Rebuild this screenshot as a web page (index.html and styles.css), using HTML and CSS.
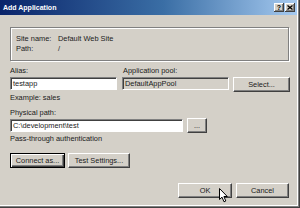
FILE: index.html
```html
<!DOCTYPE html>
<html>
<head>
<meta charset="utf-8">
<link rel="stylesheet" href="styles.css">
</head>
<body>
<div class="dialog">
  <div class="titlebar">
    <span class="title">Add Application</span>
    <div class="tbtns">
      <span class="tbtn help">?</span>
      <span class="tbtn close"><svg width="6" height="5" viewBox="0 0 6 5"><path d="M0.5 0.5 L5.5 4.5 M5.5 0.5 L0.5 4.5" stroke="#000" stroke-width="1.3"/></svg></span>
    </div>
  </div>
  <div class="content">
    <div class="group">
      <div class="info">
        <span>Site name:</span><span>Default Web Site</span>
        <span>Path:</span><span>/</span>
      </div>
    </div>
    <div class="fields">
      <span class="lbl">Alias:</span>
      <span class="lbl pool">Application pool:</span>
      <span></span>
      <div class="textbox">testapp</div>
      <div class="textbox readonly">DefaultAppPool</div>
      <div class="btn select">Select...</div>
    </div>
    <div class="line example">Example: sales</div>
    <div class="line phys">Physical path:</div>
    <div class="pathrow">
      <div class="textbox path">C:\development\test</div>
      <div class="btn dots">...</div>
    </div>
    <div class="line pass">Pass-through authentication</div>
    <div class="btnrow">
      <div class="btn focused connect">Connect as...</div>
      <div class="btn test">Test Settings...</div>
    </div>
    <div class="okrow">
      <div class="btn ok">OK</div>
      <div class="btn cancel">Cancel</div>
    </div>
  </div>
  <svg class="cursor" width="10" height="15" viewBox="0 0 10 15"><path d="M0.5 0.5 L0.5 11.5 L3 9.2 L5 13.8 L6.8 13 L4.9 8.5 L8.3 8.5 Z" fill="#fff" stroke="#000" stroke-width="1"/></svg>
</div>
</body>
</html>
```
FILE: styles.css
```css
body {
  margin: 0;
  background: #d4d0c8;
}
.dialog {
  position: relative;
  width: 300px;
  height: 208px;
  box-sizing: border-box;
  background: #d4d0c8;
  padding: 0 3px 3px 0;
  box-shadow: inset -1px -1px 0 #404040, inset -2px -2px 0 #808080, inset -3px -3px 0 #ffffff;
  font-family: "Liberation Sans", Arial, sans-serif;
  font-size: 7.4px;
  color: #1a1a1a;
  overflow: hidden;
}
.titlebar {
  height: 15px;
  background: linear-gradient(to right, #0a246a, #3a6ea5 55%, #a6caf0);
  display: flex;
  align-items: center;
  justify-content: space-between;
  padding: 0 2px 0 3px;
}
.title {
  color: #fff;
  font-weight: bold;
  font-size: 7px;
}
.tbtns {
  display: flex;
}
.tbtn {
  width: 10px;
  height: 9px;
  box-sizing: border-box;
  background: #d4d0c8;
  box-shadow: inset -1px -1px 0 #404040, inset 1px 1px 0 #fff, inset -2px -2px 0 #808080;
  display: flex;
  align-items: center;
  justify-content: center;
  font-weight: bold;
  font-size: 7px;
  color: #000;
  line-height: 1;
}
.close {
  margin-left: 1px;
}
.content {
  width: 279px;
  margin-left: 10px;
}
.group {
  margin-top: 12px;
  height: 34px;
  box-sizing: border-box;
  border: 1px solid #808080;
  box-shadow: inset 1px 1px 0 #fff, 1px 1px 0 #fff;
  padding: 6px 0 0 5px;
}
.info {
  display: grid;
  grid-template-columns: 42px auto;
  line-height: 10px;
}
.fields {
  margin-top: 5px;
  display: grid;
  grid-template-columns: 107px 107px 56px;
  column-gap: 5px;
  row-gap: 1px;
  align-items: start;
}
.fields .select {
  margin-left: -1px;
}
.lbl {
  line-height: 10px;
}
.pool {
  padding-left: 1px;
}
.textbox {
  height: 13px;
  box-sizing: border-box;
  background: #fff;
  border: 1px solid;
  border-color: #808080 #fff #fff #808080;
  box-shadow: inset 1px 1px 0 #404040;
  padding-left: 2px;
  line-height: 11px;
  white-space: nowrap;
  overflow: hidden;
}
.textbox.readonly {
  background: #d4d0c8;
}
.btn {
  height: 15px;
  box-sizing: border-box;
  background: #d4d0c8;
  border: 1px solid;
  border-color: #fff #404040 #404040 #fff;
  box-shadow: inset -1px -1px 0 #808080;
  display: flex;
  align-items: center;
  justify-content: center;
  white-space: nowrap;
}
.btn.focused {
  border-color: #000;
  box-shadow: inset 1px 1px 0 #fff, inset -1px -1px 0 #404040, inset -2px -2px 0 #808080;
}
.line {
  line-height: 10px;
}
.example {
  margin-top: 1px;
}
.phys {
  margin-top: 5px;
}
.pathrow {
  display: flex;
  align-items: center;
  gap: 4px;
}
.path {
  width: 173px;
}
.dots {
  width: 20px;
  align-items: flex-end;
  padding-bottom: 2px;
}
.pass {
  margin-top: 1px;
}
.btnrow {
  margin-top: 9px;
  display: flex;
  gap: 3px;
}
.connect {
  width: 55px;
}
.test {
  width: 62px;
}
.okrow {
  margin-top: 15px;
  display: flex;
  justify-content: flex-end;
  gap: 4px;
}
.ok {
  width: 54px;
}
.cancel {
  width: 53px;
}
.cursor {
  position: absolute;
  left: 219px;
  top: 188px;
}
```
